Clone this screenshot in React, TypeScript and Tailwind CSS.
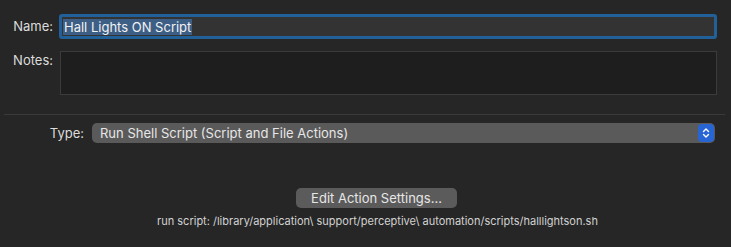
import React from "react";

export default function App() {
  const font = { fontFamily: "Inter, 'Liberation Sans', sans-serif" };
  return (
    <div
      className="w-[731px] h-[247px] bg-[#262626] text-[#dcdcdc] overflow-hidden relative"
      style={font}
    >
      {/* Name row */}
      <div className="flex items-center pt-[14px]">
        <div className="w-[53px] text-right text-[13px] leading-none">Name:</div>
        <div className="ml-[6px] w-[658px] h-[25px] border-[3px] border-[#22609a] rounded-[3px] bg-[#333333] flex items-center pl-[1px]">
          <span className="bg-[#3d5f86] text-[#f2f2f2] text-[13px] leading-[16px] px-[1px]">
            Hall Lights ON Script
          </span>
        </div>
      </div>
      {/* Notes row */}
      <div className="flex items-start mt-[12px]">
        <div className="w-[53px] text-right text-[13px] leading-none pt-[3px]">Notes:</div>
        <div className="ml-[7px] w-[657px] h-[44px] border border-[#3b3b3b] bg-[#1e1e1e]" />
      </div>
      {/* separator */}
      <div className="ml-[4px] mt-[19px] w-[721px] h-px bg-[#3a3a3a]" />
      {/* Type row */}
      <div className="flex items-center mt-[8px]">
        <div className="w-[84px] text-right text-[13px] leading-none">Type:</div>
        <div className="ml-[8px] w-[623px] h-[20px] rounded-[5px] bg-[#5a5a5a] flex items-center justify-between pl-[8px] pr-[1px]">
          <span className="text-[13px] leading-none text-[#e6e6e6]">
            Run Shell Script (Script and File Actions)
          </span>
          <div className="w-[16px] h-[18px] rounded-[4px] bg-[#2764d4] flex items-center justify-center">
            <svg width="8" height="12" viewBox="0 0 8 12" fill="none" stroke="#ffffff" strokeWidth="1.4" strokeLinecap="round" strokeLinejoin="round">
              <path d="M1.5 4.5 L4 2 L6.5 4.5" />
              <path d="M1.5 7.5 L4 10 L6.5 7.5" />
            </svg>
          </div>
        </div>
      </div>
      {/* Button */}
      <div className="flex justify-center mt-[45px] pl-[22px]">
        <div className="w-[161px] h-[20px] rounded-[5px] bg-[#5b5b5b] flex items-center justify-center text-[13px] leading-none text-[#e6e6e6]">
          Edit Action Settings...
        </div>
      </div>
      {/* bottom text */}
      <div className="flex justify-center mt-[8px] pl-[24px]">
        <span className="text-[11px] leading-none text-[#d2d2d2]">
          run script: /library/application\ support/perceptive\ automation/scripts/halllightson.sh
        </span>
      </div>
    </div>
  );
}
